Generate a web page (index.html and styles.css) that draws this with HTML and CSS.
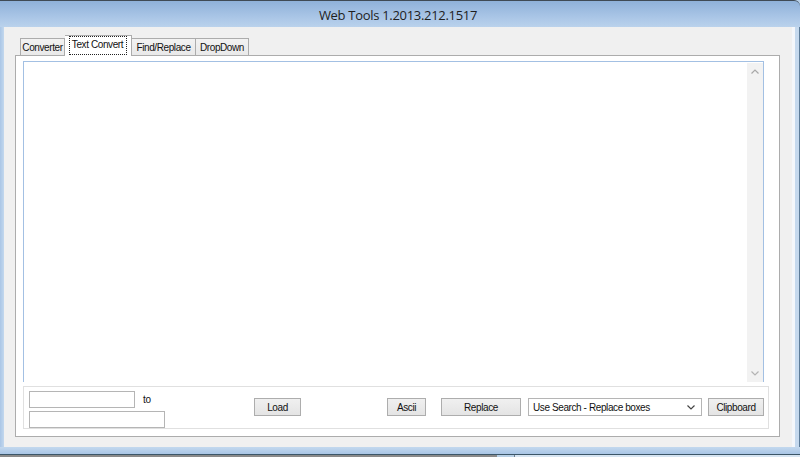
FILE: index.html
```html
<!DOCTYPE html>
<html>
<head>
<meta charset="utf-8">
<title>Web Tools</title>
<link rel="stylesheet" href="styles.css">
</head>
<body>
<div class="window">
  <div class="titlebar"><span class="title">Web Tools 1.2013.212.1517</span></div>
  <div class="middle">
    <div class="frame-l"></div>
    <div class="client">
      <div class="tabs">
        <div class="tab t1">Converter</div>
        <div class="tab active t2"><span class="focus">Text Convert</span></div>
        <div class="tab t3">Find/Replace</div>
        <div class="tab t4">DropDown</div>
      </div>
      <div class="panel">
        <div class="textbox">
          <div class="vscroll">
            <svg class="chev" width="8" height="5" viewBox="0 0 8 5"><polyline points="0.5,4.5 4,1 7.5,4.5" fill="none" stroke="#a8a8a8" stroke-width="1.2"/></svg>
            <svg class="chev" width="8" height="5" viewBox="0 0 8 5"><polyline points="0.5,0.5 4,4 7.5,0.5" fill="none" stroke="#b4b4b4" stroke-width="1.2"/></svg>
          </div>
        </div>
        <div class="group">
          <div class="inputs">
            <div class="row1"><div class="input w1"></div><span class="to">to</span></div>
            <div class="input w2"></div>
          </div>
          <div class="btn load">Load</div>
          <div class="btn ascii">Ascii</div>
          <div class="btn replace">Replace</div>
          <div class="select"><span>Use Search - Replace boxes</span><svg width="8" height="5" viewBox="0 0 8 5"><polyline points="0.5,0.5 4,4 7.5,0.5" fill="none" stroke="#444" stroke-width="1.2"/></svg></div>
          <div class="btn clip">Clipboard</div>
        </div>
      </div>
    </div>
    <div class="frame-r"></div>
  </div>
  <div class="bottomframe"></div>
  <div class="edge"></div>
  <div class="taskbar"><div class="tb-left"></div><div class="tb-mid"></div><div class="tb-right"></div></div>
</div>
</body>
</html>
```
FILE: styles.css
```css
html, body {
  margin: 0;
  padding: 0;
  width: 800px;
  height: 457px;
  overflow: hidden;
  background: #b9d1ea;
}
.window {
  display: flex;
  flex-direction: column;
  width: 800px;
  height: 457px;
  font-family: "Liberation Sans", Arial, sans-serif;
  font-size: 10px;
  letter-spacing: -0.4px;
  color: #111;
}
.titlebar {
  height: 26px;
  border-top: 1px solid #3f4a55;
  border-radius: 0 6px 0 0;
  background: linear-gradient(#8fb1d9, #a9c5e6 60%, #bad2ec);
  display: flex;
  align-items: center;
  justify-content: center;
}
.title {
  font-family: "Open Sans", "Noto Sans", sans-serif;
  font-size: 13px;
  letter-spacing: -0.3px;
  color: #1e1e1e;
  margin-top: 2px;
  margin-left: -4px;
}
.middle {
  display: flex;
  height: 420px;
}
.frame-l {
  width: 4px;
  background: linear-gradient(to right, #aac6e6, #c3d8ee);
}
.frame-r {
  width: 8px;
  background: linear-gradient(to right, #f4f7fb 0 3px, #c5d9ee 3px 7px, #5d7c99 7px);
}
.client {
  flex: 1;
  background: #f0f0f0;
  padding: 8px 0 0 11px;
}
.tabs {
  display: flex;
  align-items: flex-end;
  height: 20px;
  margin-left: 5px;
}
.tab {
  box-sizing: border-box;
  height: 17px;
  border: 1px solid #acacac;
  border-bottom: none;
  background: linear-gradient(#f2f2f2, #e9e9e9);
  display: flex;
  align-items: center;
  justify-content: center;
  padding-top: 1px;
}
.t1 { width: 45px; }
.t3 { width: 64px; border-left: none; }
.t4 { width: 53px; border-left: none; }
.tab.active {
  width: 67px;
  height: 21px;
  margin-bottom: -1px;
  background: #fff;
  border-left: none;
  position: relative;
  z-index: 1;
  align-items: flex-start;
  padding-top: 1px;
}
.focus {
  outline: 1px dotted #222;
  padding: 2px 3px 4px 2px;
  line-height: 11px;
}
.panel {
  box-sizing: border-box;
  width: 765px;
  height: 382px;
  border: 1px solid #acacac;
  background: #fff;
  padding: 5px 0 0 7px;
}
.textbox {
  box-sizing: border-box;
  width: 741px;
  height: 321px;
  border: 1px solid #a3c0e3;
  border-bottom: none;
  display: flex;
  justify-content: flex-end;
  padding: 1px 0 0 0;
}
.vscroll {
  width: 16px;
  background: #f2f2f2;
  display: flex;
  flex-direction: column;
  justify-content: space-between;
  align-items: center;
  padding: 6px 0 6px 0;
  box-sizing: border-box;
}
.chev { display: block; }
.group {
  box-sizing: border-box;
  width: 746px;
  height: 43px;
  margin-top: 4px;
  border: 1px solid #e0e0e0;
  display: flex;
  align-items: flex-start;
  padding: 4px 0 0 5px;
}
.inputs {
  width: 225px;
  display: flex;
  flex-direction: column;
  gap: 3px;
}
.row1 {
  display: flex;
  align-items: flex-start;
}
.input {
  box-sizing: border-box;
  height: 17px;
  border: 1px solid #b5b5b5;
  background: #fff;
}
.w1 { width: 106px; }
.w2 { width: 136px; }
.to {
  margin-left: 8px;
  margin-top: 3px;
  line-height: 11px;
}
.btn {
  box-sizing: border-box;
  height: 18px;
  margin-top: 7px;
  border: 1px solid #adadad;
  background: linear-gradient(#f0f0f0, #e4e4e4);
  display: flex;
  align-items: center;
  justify-content: center;
}
.load { width: 47px; }
.ascii { width: 39px; margin-left: 86px; }
.replace { width: 80px; margin-left: 15px; }
.select {
  box-sizing: border-box;
  width: 174px;
  height: 18px;
  margin-top: 7px;
  margin-left: 7px;
  border: 1px solid #b5b5b5;
  background: #fff;
  display: flex;
  align-items: center;
  justify-content: space-between;
  padding: 0 6px 0 4px;
}
.clip { width: 56px; margin-left: 6px; }
.bottomframe {
  height: 7px;
  background: linear-gradient(#c3d8ee, #a9c6e6);
}
.edge {
  height: 1px;
  background: #3b5668;
}
.taskbar {
  height: 2px;
  display: flex;
}
.tb-left { width: 497px; background: #8a8a8a; }
.tb-mid { width: 17px; background: #b8d0e6; border-right: 1px solid #6f8090; }
.tb-right { flex: 1; background: #d6e4f1; }
```
